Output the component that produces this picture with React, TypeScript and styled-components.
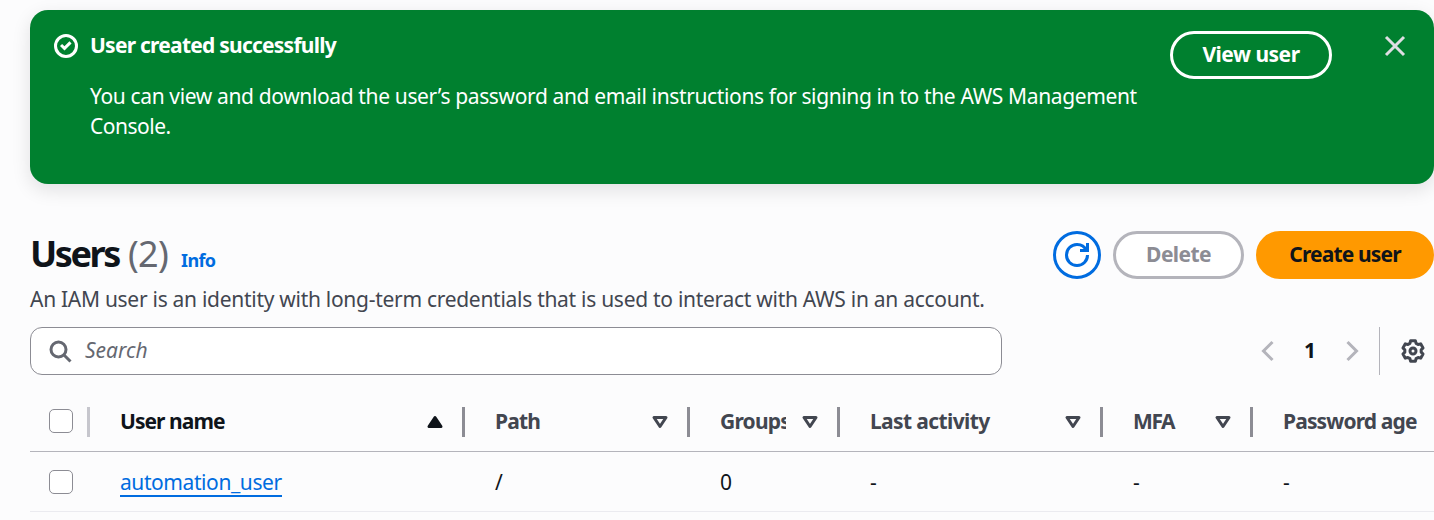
import React from "react";
import styled, { createGlobalStyle, css } from "styled-components";

const GlobalStyle = createGlobalStyle`
  * { box-sizing: border-box; }
  html, body { margin: 0; height: 100%; overflow: hidden; background: #fcfcfd; }
  body { font-family: "Noto Sans", "Open Sans", sans-serif; font-size: 21px; line-height: 30px; color: #0f141a; }
  button, input { font: inherit; }
`;

const Page = styled.main`
  width: 1434px;
  height: 520px;
  padding: 10px 0 0 30px;
  overflow: hidden;
`;

const Tracked = styled.span<{ $track?: number }>`
  letter-spacing: ${(p) => p.$track ?? 0}px;
  white-space: pre;
`;

/* A 30px line whose baseline sits slightly above the middle. */
const Text = styled(Tracked)`
  display: block;
  line-height: 28px;
  padding-bottom: 2px;
`;

const Flash = styled.section`
  display: flex;
  align-items: flex-start;
  height: 174px;
  padding: 21px 24px 0;
  border-radius: 18px;
  background: #00802f;
  color: #fff;
  box-shadow: 0 6px 18px 1px rgba(0, 7, 22, 0.1);
`;

const FlashIcon = styled.div`
  display: flex;
  width: 36px;
  padding-top: 3px;
`;

const FlashBody = styled.div`
  flex: 1;
`;

const FlashTitle = styled.div`
  font-weight: 700;
`;

const FlashText = styled.p`
  margin: 21px 0 0;
`;

const FlashClose = styled.button`
  display: flex;
  margin: 3px 3px 0 51px;
  padding: 0;
  border: 0;
  background: none;
  color: #dedee3;
`;

const Button = styled.button<{ $kind: "flash" | "disabled" | "primary" | "icon"; $width: number }>`
  display: flex;
  align-items: center;
  justify-content: center;
  flex: none;
  width: ${(p) => p.$width}px;
  height: 48px;
  padding: 0;
  border: 3px solid;
  border-radius: 24px;
  font-weight: 700;
  ${(p) => p.$kind === "flash" && css`border-color: #fff; background: transparent; color: #fff;`}
  ${(p) => p.$kind === "disabled" && css`border-color: #b4b4bb; background: #fff; color: #8c8c94;`}
  ${(p) => p.$kind === "primary" && css`border-color: #ff9900; background: #ff9900; color: #0f141a;`}
  ${(p) => p.$kind === "icon" && css`border-color: #006ce0; background: #fff; color: #006ce0;`}
`;

const Header = styled.header`
  display: flex;
  justify-content: space-between;
  height: 48px;
  margin-top: 47px;
`;

const Heading = styled.div`
  display: flex;
  align-items: baseline;
  line-height: 45px;
`;

const Title = styled.h1`
  margin: 0;
  width: 98px;
  font-size: 36px;
  font-weight: 700;
`;

const Counter = styled.span`
  width: 53px;
  font-size: 36px;
  color: #656871;
`;

const InfoLink = styled.a`
  font-size: 18px;
  font-weight: 700;
  color: #006ce0;
`;

const Actions = styled.div`
  display: flex;
  gap: 12px;
`;

const Description = styled.p`
  margin: 6px 0 0;
  color: #424650;
`;

const Tools = styled.div`
  display: flex;
  align-items: center;
  justify-content: space-between;
  margin-top: 12px;
`;

const SearchBox = styled.div`
  display: flex;
  align-items: center;
  gap: 13px;
  width: 972px;
  height: 48px;
  padding-left: 17px;
  border: 1px solid #8c8c94;
  border-radius: 12px;
  background: #fff;
  color: #656871;
  font-style: italic;
`;

const Pager = styled.div`
  display: flex;
  align-items: center;
  height: 48px;
  color: #b4b4bb;
`;

const PageNumber = styled.div`
  width: 60px;
  text-align: center;
  font-weight: 700;
  color: #0f141a;
`;

const Preferences = styled.div`
  display: flex;
  align-items: center;
  height: 48px;
  margin-left: 15px;
  padding: 0 9px 0 21px;
  border-left: 1px solid #b4b4bb;
  color: #424650;
`;

const Table = styled.div`
  margin-top: 17px;
`;

const Row = styled.div<{ $head?: boolean }>`
  display: grid;
  grid-template-columns: 60px 375px 225px 150px 263px 150px 181px;
  align-items: center;
  height: 60px;
  padding-top: 1px;
  border-bottom: 1px solid ${(p) => (p.$head ? "#b4b4bb" : "#ebebf0")};
  font-weight: ${(p) => (p.$head ? 700 : 400)};
`;

const Cell = styled.div<{ $active?: boolean; $first?: boolean; $divider?: string }>`
  display: flex;
  align-items: center;
  justify-content: space-between;
  height: 30px;
  padding: 0 ${(p) => (p.$divider ? 15 : 0)}px 0 ${(p) => (p.$first ? 19 : 30)}px;
  border-right: ${(p) => (p.$divider ? `3px solid ${p.$divider}` : "0")};
  color: ${(p) => (p.$active ? "#0f141a" : "#424650")};
`;

const Label = styled.div`
  overflow: hidden;
  flex: 1;
  margin-right: 12px;
`;

const Value = styled(Cell)`
  color: #0f141a;
  justify-content: flex-start;
`;

const Checkbox = styled.span<{ $raised?: boolean }>`
  flex: none;
  width: 24px;
  height: 24px;
  margin-bottom: ${(p) => (p.$raised ? 2 : 0)}px;
  border: 1px solid #8c8c94;
  border-radius: 5px;
  background: #fff;
`;

const UserLink = styled.a`
  height: 30px;
  border-bottom: 2px solid #006ce0;
  color: #006ce0;
`;

const Svg = styled.svg`
  display: block;
  flex: none;
  width: 24px;
  height: 24px;
  fill: none;
  stroke: currentColor;
  stroke-width: 2;
`;

const Icon = ({ children }: { children: React.ReactNode }) => (
  <Svg viewBox="0 0 16 16">{children}</Svg>
);

const SortIcon = ({ up }: { up?: boolean }) => (
  <Icon>
    {up ? (
      <path d="M4 11h8L8 5l-4 6Z" fill="currentColor" strokeLinejoin="round" />
    ) : (
      <path d="M4 5h8l-4 6-4-6Z" strokeLinejoin="round" />
    )}
  </Icon>
);

/* Six-toothed outline: each tooth is a flat top between two valley points. */
const gearPoints = Array.from({ length: 6 }, (_, i) => i * 60 - 90)
  .flatMap((a) => [
    [a - 22, 5.5],
    [a - 13, 7],
    [a + 13, 7],
    [a + 22, 5.5],
  ])
  .map(([deg, r]) => {
    const t = (deg * Math.PI) / 180;
    return `${(8 + r * Math.cos(t)).toFixed(2)},${(8 + r * Math.sin(t)).toFixed(2)}`;
  })
  .join(" ");

const columns = [
  { label: "User name", track: -0.95, active: true },
  { label: "Path", track: -0.8 },
  { label: "Groups", track: -0.8 },
  { label: "Last activity", track: -0.62 },
  { label: "MFA", track: -1.4 },
];

export default function App() {
  return (
    <Page>
      <GlobalStyle />
      <Flash>
        <FlashIcon>
          <Icon>
            <circle cx="8" cy="8" r="7" />
            <path d="m4.7 7.3 2.3 2.3 4-4" />
          </Icon>
        </FlashIcon>
        <FlashBody>
          <FlashTitle><Text $track={-0.76}>User created successfully</Text></FlashTitle>
          <FlashText>
            <Text as="span" $track={-0.365}>You can view and download the user’s password and email instructions for signing in to the AWS Management</Text>
            <Text as="span" $track={-0.5}>Console.</Text>
          </FlashText>
        </FlashBody>
        <Button $kind="flash" $width={162}><Text $track={-0.5}>View user</Text></Button>
        <FlashClose>
          <Icon><path d="m2 2 12 12m0-12L2 14" /></Icon>
        </FlashClose>
      </Flash>

      <Header>
        <Heading>
          <Title><Tracked $track={-2.4}>Users</Tracked></Title>
          <Counter><Tracked $track={-0.7}>(2)</Tracked></Counter>
          <InfoLink><Tracked $track={-0.6}>Info</Tracked></InfoLink>
        </Heading>
        <Actions>
          <Button $kind="icon" $width={48}>
            <Icon>
              <path d="M10 5h5V0M15 8a6.957 6.957 0 0 1-7 7 6.957 6.957 0 0 1-7-7 6.957 6.957 0 0 1 7-7 6.87 6.87 0 0 1 6.3 4" />
            </Icon>
          </Button>
          <Button $kind="disabled" $width={131}><Text $track={-0.6}>Delete</Text></Button>
          <Button $kind="primary" $width={178}><Text $track={-0.85}>Create user</Text></Button>
        </Actions>
      </Header>
      <Description>
        <Text $track={-0.285}>An IAM user is an identity with long-term credentials that is used to interact with AWS in an account.</Text>
      </Description>

      <Tools>
        <SearchBox>
          <Icon><circle cx="7" cy="7" r="5" /><path d="m15 15-4.5-4.5" /></Icon>
          <Text>Search</Text>
        </SearchBox>
        <Pager>
          <Icon><path d="M11 2 5 8l6 6" /></Icon>
          <PageNumber><Text>1</Text></PageNumber>
          <Icon><path d="m5 2 6 6-6 6" /></Icon>
          <Preferences>
            <Icon>
              <circle cx="8" cy="8" r="2" />
              <polygon points={gearPoints} strokeLinejoin="round" />
            </Icon>
          </Preferences>
        </Pager>
      </Tools>

      <Table>
        <Row $head>
          <Cell $first $divider="#c6c6cd"><Checkbox $raised /></Cell>
          {columns.map((c) => (
            <Cell key={c.label} $divider="#8c8c94" $active={c.active}>
              <Label><Text $track={c.track}>{c.label}</Text></Label>
              <SortIcon up={c.active} />
            </Cell>
          ))}
          <Cell><Text $track={-0.85}>Password age</Text></Cell>
        </Row>
        <Row>
          <Value $first><Checkbox /></Value>
          <Value><UserLink><Tracked $track={-0.42}>automation_user</Tracked></UserLink></Value>
          <Value>/</Value>
          <Value>0</Value>
          <Value>-</Value>
          <Value>-</Value>
          <Value>-</Value>
        </Row>
      </Table>
    </Page>
  );
}
